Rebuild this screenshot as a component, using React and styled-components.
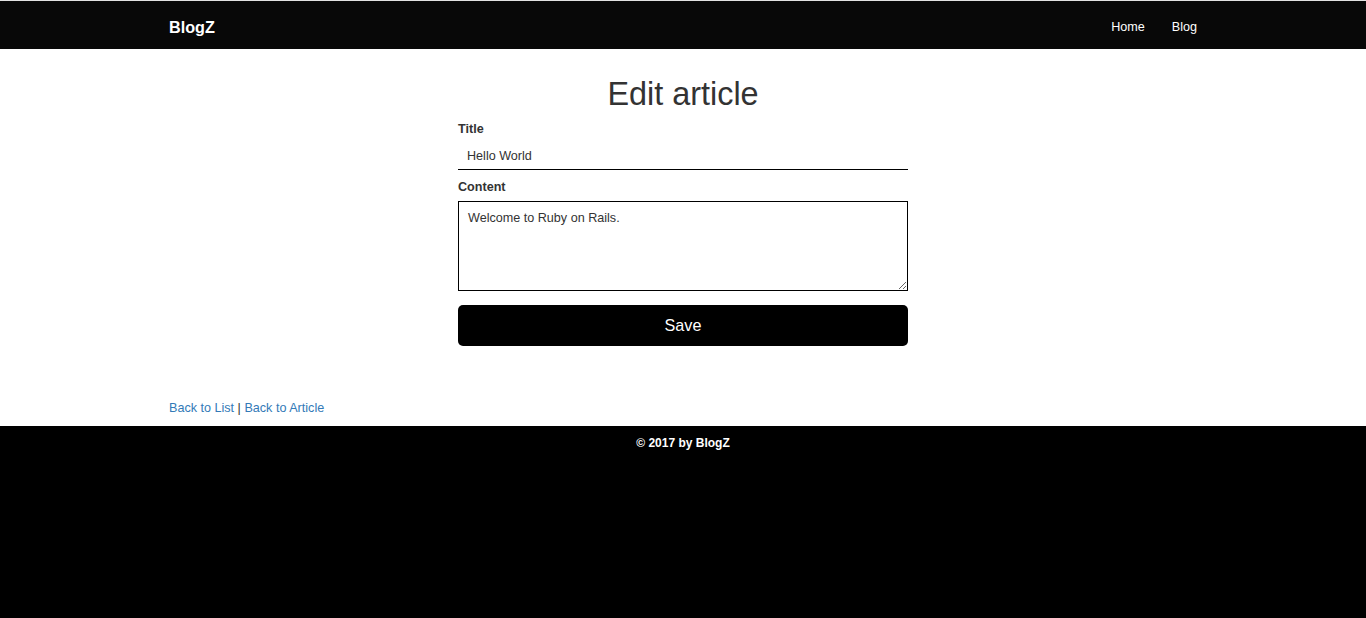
import React from "react";
import styled, { createGlobalStyle } from "styled-components";

const GlobalStyle = createGlobalStyle`
  html, body, #root {
    height: 100%;
  }
  body {
    margin: 0;
    font-family: "Liberation Sans", Arial, sans-serif;
    font-size: 12.6px;
    line-height: 18px;
    color: #333;
    background: #fff;
  }
`;

const Page = styled.div`
  display: flex;
  flex-direction: column;
  min-height: 100%;
`;

const Navbar = styled.header`
  border-top: 1px solid #e2e2e2;
  background: #080808;
  height: 44px;
  padding-top: 4px;
`;

const Container = styled.div`
  width: 1028px;
  margin: 0 auto;
`;

const NavInner = styled(Container)`
  display: flex;
  align-items: center;
  justify-content: space-between;
  height: 100%;
`;

const Brand = styled.a`
  color: #fff;
  font-size: 16.2px;
  font-weight: bold;
  text-decoration: none;
`;

const NavLinks = styled.nav`
  display: flex;
  gap: 27px;
`;

const NavLink = styled.a`
  color: #fff;
  text-decoration: none;
`;

const Main = styled.main`
  padding-top: 28px;
`;

const Heading = styled.h1`
  margin: 0 0 7px;
  font-size: 32.4px;
  line-height: 1.1;
  font-weight: 400;
  text-align: center;
  color: #333;
`;

const Form = styled.form`
  width: 450px;
  margin: 0 auto;
`;

const Group = styled.div`
  margin-bottom: 8px;
`;

const Label = styled.label`
  display: block;
  font-weight: bold;
  margin-bottom: 5px;
`;

const TitleInput = styled.input`
  display: block;
  box-sizing: border-box;
  width: 100%;
  height: 27px;
  padding: 0 9px;
  border: none;
  border-bottom: 1px solid #000;
  font: inherit;
  color: #333;
  outline: none;
`;

const ContentArea = styled.textarea`
  display: block;
  box-sizing: border-box;
  width: 100%;
  height: 90px;
  padding: 7px 9px;
  border: 1px solid #000;
  font: inherit;
  color: #333;
  outline: none;
`;

const SaveButton = styled.button`
  display: block;
  width: 100%;
  height: 41px;
  margin-top: 14px;
  border: none;
  border-radius: 5px;
  background: #000;
  color: #fff;
  font-family: inherit;
  font-size: 16.2px;
  cursor: pointer;
`;

const BackLinks = styled(Container)`
  margin-top: 53px;
  margin-bottom: 9px;
`;

const Link = styled.a`
  color: #337ab7;
  text-decoration: none;
`;

const Footer = styled.footer`
  flex: 1;
  background: #000;
  color: #fff;
  text-align: center;
  font-size: 12px;
  font-weight: bold;
  padding-top: 8px;
`;

export default function App() {
  return (
    <>
      <GlobalStyle />
      <Page>
        <Navbar>
          <NavInner>
            <Brand href="#">BlogZ</Brand>
            <NavLinks>
              <NavLink href="#">Home</NavLink>
              <NavLink href="#">Blog</NavLink>
            </NavLinks>
          </NavInner>
        </Navbar>
        <Main>
          <Heading>Edit article</Heading>
          <Form onSubmit={(e) => e.preventDefault()}>
            <Group>
              <Label htmlFor="title">Title</Label>
              <TitleInput id="title" defaultValue="Hello World" />
            </Group>
            <Group>
              <Label htmlFor="content">Content</Label>
              <ContentArea id="content" defaultValue="Welcome to Ruby on Rails." />
            </Group>
            <SaveButton type="submit">Save</SaveButton>
          </Form>
        </Main>
        <BackLinks>
          <Link href="#">Back to List</Link> | <Link href="#">Back to Article</Link>
        </BackLinks>
        <Footer>© 2017 by BlogZ</Footer>
      </Page>
    </>
  );
}
